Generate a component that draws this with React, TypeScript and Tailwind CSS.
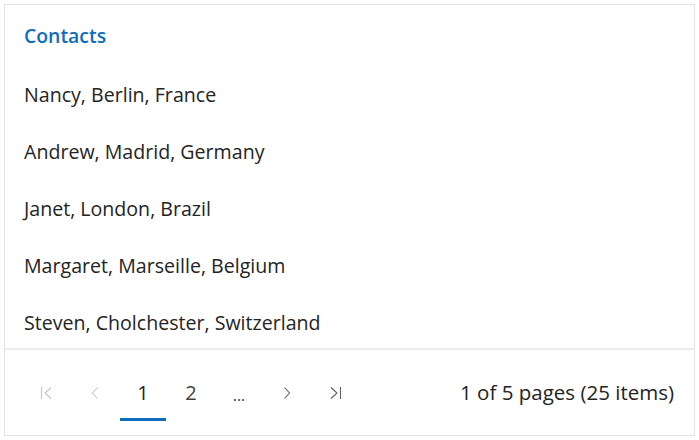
import React from "react";

const contacts = [
  "Nancy, Berlin, France",
  "Andrew, Madrid, Germany",
  "Janet, London, Brazil",
  "Margaret, Marseille, Belgium",
  "Steven, Cholchester, Switzerland",
];

function FirstIcon() {
  return (
    <svg width="14" height="14" viewBox="0 0 14 14" fill="none" stroke="currentColor" strokeWidth="1.1">
      <path d="M1.5 1v12" />
      <path d="M11 1.5L5 7l6 5.5" />
    </svg>
  );
}

function PrevIcon() {
  return (
    <svg width="8" height="14" viewBox="0 0 8 14" fill="none" stroke="currentColor" strokeWidth="1.1">
      <path d="M6.5 1.5L1.5 7l5 5.5" />
    </svg>
  );
}

function NextIcon() {
  return (
    <svg width="8" height="14" viewBox="0 0 8 14" fill="none" stroke="currentColor" strokeWidth="1.1">
      <path d="M1.5 1.5L6.5 7l-5 5.5" />
    </svg>
  );
}

function LastIcon() {
  return (
    <svg width="14" height="14" viewBox="0 0 14 14" fill="none" stroke="currentColor" strokeWidth="1.1">
      <path d="M3 1.5L9 7l-6 5.5" />
      <path d="M12.5 1v12" />
    </svg>
  );
}

export default function App() {
  return (
    <div className="p-1 bg-white font-['Open_Sans',sans-serif]">
      <div className="h-[432px] border border-[#e3e3e3] bg-white flex flex-col">
        {/* Header */}
        <div className="h-[61px] flex items-center px-[19px]">
          <span className="text-[19.4px] font-semibold text-[#0f6cbd]">Contacts</span>
        </div>

        {/* List */}
        <div className="h-[282px] overflow-hidden">
          {contacts.map((c) => (
            <div key={c} className="h-[57px] flex items-center px-[19px] text-[19.6px] text-[#242424]">
              {c}
            </div>
          ))}
        </div>

        {/* Pager */}
        <div className="flex-1 border-t-2 border-[#ebebeb] flex items-center justify-between pl-[19px] pr-[20px]">
          <div className="flex items-center gap-[2px]">
            <div className="w-[46px] h-[84px] flex items-center justify-center text-[#c4c4c4]">
              <FirstIcon />
            </div>
            <div className="w-[46px] h-[84px] flex items-center justify-center text-[#c4c4c4]">
              <PrevIcon />
            </div>
            <div className="relative w-[46px] h-[84px] flex items-center justify-center text-[20px] text-[#242424]">
              1
              <span className="absolute left-0 right-0 bottom-[14px] h-[3px] bg-[#0f6cbd]" />
            </div>
            <div className="w-[46px] h-[84px] flex items-center justify-center text-[20px] text-[#424242]">
              2
            </div>
            <div className="w-[46px] h-[84px] flex items-center justify-center text-[16px] text-[#424242] pt-[4px]">
              ...
            </div>
            <div className="w-[46px] h-[84px] flex items-center justify-center text-[#616161]">
              <NextIcon />
            </div>
            <div className="w-[46px] h-[84px] flex items-center justify-center text-[#616161]">
              <LastIcon />
            </div>
          </div>
          <span className="text-[20.5px] font-medium text-[#242424]">1 of 5 pages (25 items)</span>
        </div>
      </div>
    </div>
  );
}
